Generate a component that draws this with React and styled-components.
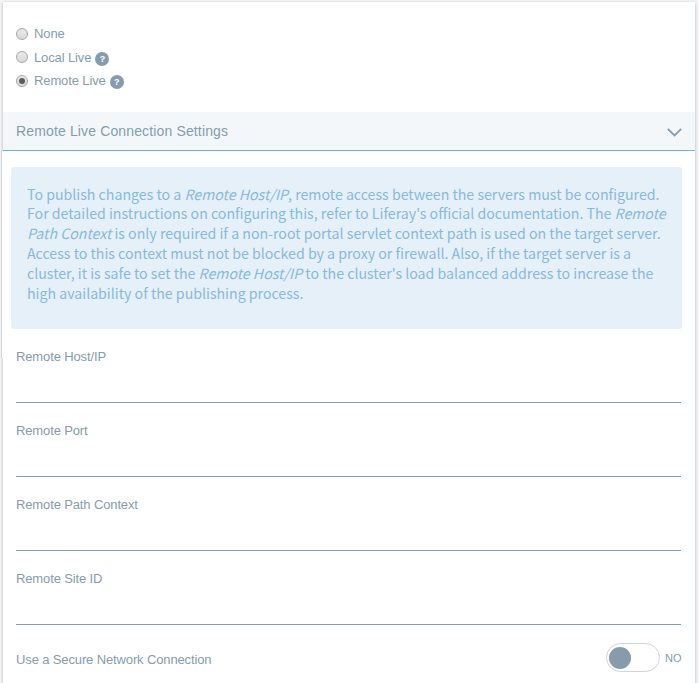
import React from "react";
import styled, { createGlobalStyle } from "styled-components";

const Global = createGlobalStyle`
  * { box-sizing: border-box; }
  body {
    margin: 0;
    background: #f4f5f6;
    color: #869cad;
    font-family: "Liberation Sans", Arial, sans-serif;
    font-size: 13px;
    overflow: hidden;
  }
`;

const Page = styled.div`
  height: 683px;
  padding: 2px 4px 0 3px;
  overflow: hidden;
`;

const Card = styled.main`
  height: 690px;
  background: #fff;
  box-shadow: 0 1px 3px rgba(0, 0, 0, 0.28);
`;

const Options = styled.div`
  height: 110px;
  padding: 20px 0 0 13px;
`;

const Option = styled.label`
  display: flex;
  align-items: center;
  height: 23.5px;
  line-height: 15px;
  letter-spacing: -0.12px;
`;

const Radio = styled.span`
  display: flex;
  align-items: center;
  justify-content: center;
  width: 12px;
  height: 12px;
  margin-right: 6px;
  border: 1px solid #a6a6a6;
  border-radius: 50%;
  background: linear-gradient(#e9e9e9, #d9d9d9);

  &::after {
    content: "";
    width: 6px;
    height: 6px;
    border-radius: 50%;
    background: ${(p) => (p.$checked ? "#5c5c5c" : "transparent")};
  }
`;

const Help = styled.span`
  width: 14px;
  height: 14px;
  margin: 3px 0 0 4px;
  border-radius: 50%;
  background: #869cad;
  color: #fff;
  font-size: 9px;
  font-weight: bold;
  line-height: 14px;
  text-align: center;
`;

const SectionHeader = styled.header`
  display: flex;
  align-items: center;
  justify-content: space-between;
  height: 39px;
  padding: 0 13px;
  border-bottom: 1px solid #65b6f0;
  background: #f4f7fa;
  font-size: 14px;
`;

const Title = styled.span`
  letter-spacing: 0.14px;
`;

const Chevron = styled.svg`
  width: 15px;
  height: 9px;
  margin-top: 2px;
`;

const InfoArea = styled.section`
  height: 207px;
  margin-left: -1px;
  padding: 16px 13px 0 9px;
  background: #fff;
  box-shadow: -1px 0 0 #d4d6d8;
`;

const Info = styled.div`
  height: 162px;
  padding: 17px 0 0 16px;
  border-radius: 3px;
  background: #e6f0f9;
  color: #86b9de;
  font-family: "Noto Sans CJK SC", sans-serif;
  font-size: 14.16px;
`;

const InfoLine = styled.div`
  height: 20px;
  line-height: 20px;
  white-space: nowrap;

  &:first-child {
    height: 19px;
  }
`;

const Term = styled.em`
  font-style: italic;
`;

const Fields = styled.form`
  padding: 0 14px 0 13px;
  margin-top: -10px;
  letter-spacing: -0.13px;
`;

const Field = styled.label`
  display: block;
  height: 74px;
  padding-top: 1px;
  line-height: 15px;
`;

const Input = styled.input`
  display: block;
  width: 100%;
  height: 39px;
  padding: 0;
  border: 0;
  border-bottom: 1px solid #869cad;
  outline: 0;
  background: transparent;
`;

const SwitchRow = styled.div`
  display: flex;
  align-items: center;
  height: 29px;
  margin-top: -1px;
`;

const SwitchLabel = styled.span`
  margin-top: 4px;
`;

const Switch = styled.span`
  width: 54px;
  height: 29px;
  margin-left: auto;
  padding: 3px 2px;
  border: 1px solid #ced6d5;
  border-radius: 15px;

  &::after {
    content: "";
    display: block;
    width: 22px;
    height: 22px;
    border-radius: 50%;
    background: #869cad;
  }
`;

const State = styled.span`
  width: 16px;
  margin-left: 5px;
  font-size: 11px;
  letter-spacing: 0;
`;

const options = [
  { label: "None" },
  { label: "Local Live", help: true },
  { label: "Remote Live", help: true, checked: true },
];

const fields = ["Remote Host/IP", "Remote Port", "Remote Path Context", "Remote Site ID"];

export default function App() {
  return (
    <Page>
      <Global />
      <Card>
        <Options>
          {options.map((o) => (
            <Option key={o.label}>
              <Radio $checked={o.checked} />
              {o.label}
              {o.help && <Help>?</Help>}
            </Option>
          ))}
        </Options>
        <SectionHeader>
          <Title>Remote Live Connection Settings</Title>
          <Chevron viewBox="0 0 15 9" fill="none" stroke="#869cad" strokeWidth="1.8">
            <path d="M0.8 0.8 7.5 7.5 14.2 0.8" />
          </Chevron>
        </SectionHeader>
        <InfoArea>
          <Info>
            <InfoLine>
              To publish changes to a <Term>Remote Host/IP</Term>, remote access between the servers must be configured.
            </InfoLine>
            <InfoLine>
              For detailed instructions on configuring this, refer to Liferay's official documentation. The <Term>Remote</Term>
            </InfoLine>
            <InfoLine>
              <Term>Path Context</Term> is only required if a non-root portal servlet context path is used on the target server.
            </InfoLine>
            <InfoLine>
              Access to this context must not be blocked by a proxy or firewall. Also, if the target server is a
            </InfoLine>
            <InfoLine>
              cluster, it is safe to set the <Term>Remote Host/IP</Term> to the cluster's load balanced address to increase the
            </InfoLine>
            <InfoLine>high availability of the publishing process.</InfoLine>
          </Info>
        </InfoArea>
        <Fields>
          {fields.map((name) => (
            <Field key={name}>
              {name}
              <Input />
            </Field>
          ))}
          <SwitchRow>
            <SwitchLabel>Use a Secure Network Connection</SwitchLabel>
            <Switch />
            <State>NO</State>
          </SwitchRow>
        </Fields>
      </Card>
    </Page>
  );
}
